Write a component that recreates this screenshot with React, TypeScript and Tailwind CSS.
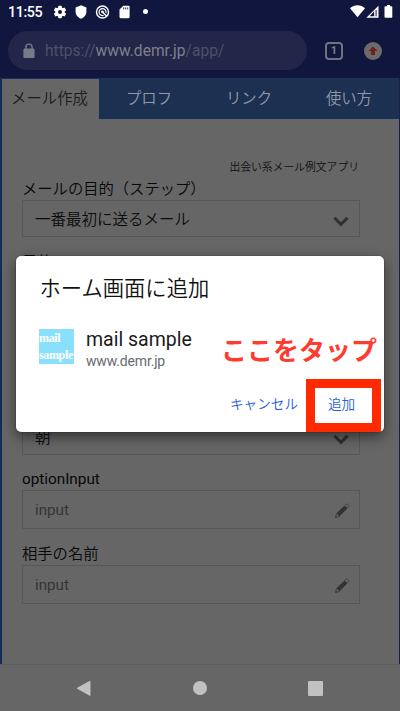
import React from "react";

const tabs = ["プロフ", "リンク", "使い方"];

function StatusBar() {
  return (
    <div className="flex h-6 items-center pl-2 pr-[7px] text-white">
      <span className="w-[35px] whitespace-nowrap text-[14.3px] font-medium leading-6 tracking-[-0.4px]">11:55</span>
      <svg className="ml-[10px] shrink-0" width="14" height="14" viewBox="0 0 14 14">
        <g fill="white">
          <circle cx="7" cy="7" r="4.8" />
          <rect x="5.2" y="0.8" width="3.6" height="12.4" rx="0.7" />
          <rect x="5.2" y="0.8" width="3.6" height="12.4" rx="0.7" transform="rotate(60 7 7)" />
          <rect x="5.2" y="0.8" width="3.6" height="12.4" rx="0.7" transform="rotate(120 7 7)" />
        </g>
        <circle cx="7" cy="7" r="2" fill="#11163f" />
      </svg>
      <svg className="ml-[8px] shrink-0" width="12" height="14" viewBox="0 0 12 14">
        <path d="M6 .3 11.4 2.5V6.5C11.4 9.9 9.2 12.6 6 13.7 2.8 12.6.6 9.9.6 6.5V2.5Z" fill="white" />
      </svg>
      <svg className="ml-[8px] shrink-0" width="15" height="14" viewBox="0 0 15 14" fill="none" stroke="white">
        <circle cx="7.5" cy="7" r="6" strokeWidth="1.4" />
        <path d="M8.6 10.4A3.5 3.5 0 1 1 10.9 8" strokeWidth="1.2" />
        <path d="m7 6.5 4.9 4.9" strokeWidth="1.4" />
        <circle cx="7.4" cy="6.8" r="1.4" fill="white" stroke="none" />
      </svg>
      <svg className="ml-[9px] shrink-0" width="12" height="14" viewBox="0 0 12 14">
        <path d="M4.3.8h5.2a1.1 1.1 0 0 1 1.1 1.1v10.2a1.1 1.1 0 0 1-1.1 1.1H1.6A1.1 1.1 0 0 1 .5 12.1V4.5Z" fill="white" />
        <path d="M4.7 2.4v2M6.7 2.4v2M8.7 2.4v2" stroke="#11163f" strokeWidth=".9" />
      </svg>
      <span className="ml-[12px] size-[5px] -translate-y-px rounded-full bg-white" />
      <svg className="ml-auto shrink-0" width="43" height="16" viewBox="0 0 43 16">
        <path d="M0 4.2C4 .1 11 .1 15 4.2L7.5 13.3Z" fill="white" />
        <path fillRule="evenodd" d="M28.5 1.7v12H16.3ZM24.2 7.3l-4.6 5H24.2Z" fill="white" />
        <path d="M26.1 6v6.3" stroke="#11163f" strokeWidth="1" />
        <path d="M37 1h3v1.3h1.6a.7.7 0 0 1 .7.7v10a.7.7 0 0 1-.7.7h-6.4a.7.7 0 0 1-.7-.7V3a.7.7 0 0 1 .7-.7H37Z" fill="white" />
      </svg>
    </div>
  );
}

function AddressBar() {
  return (
    <div className="mt-[7px] flex h-[39px] items-center pl-2">
      <div className="flex h-[39px] w-[299px] items-center rounded-full bg-[#232649] pl-[15px]">
        <svg width="12" height="16" viewBox="0 0 12 16">
          <rect x=".4" y="5.4" width="11.2" height="9.6" rx="1.3" fill="#777a87" />
          <path d="M2.9 6V4.2a3.1 3.1 0 0 1 6.2 0V6" fill="none" stroke="#777a87" strokeWidth="1.4" />
        </svg>
        <span className="ml-[10px] whitespace-nowrap pt-[3px] text-[15.6px] text-[#4e5167]">
          https://<span className="text-[#7d808c]">www.demr.jp</span>/app/
        </span>
      </div>
      <div className="ml-[18px] flex size-[18px] items-center justify-center rounded-[4px] border-2 border-[#70737f] text-[11px] font-bold leading-none text-[#7d808c]">1</div>
      <div className="ml-[21px] flex size-[18px] items-center justify-center rounded-full bg-[#6b6b6c]">
        <svg width="10" height="10" viewBox="0 0 10 10"><path d="M5 .5 9.6 5H7v4H3V5H.4Z" fill="#702020" /></svg>
      </div>
    </div>
  );
}

function Chevron() {
  return (
    <svg width="16" height="11" viewBox="0 0 16 11" fill="none" stroke="#303030" strokeWidth="3">
      <path d="m1.4 1.8 6.6 6.6 6.6-6.6" />
    </svg>
  );
}

function Pencil() {
  return (
    <svg width="16" height="16" viewBox="0 0 16 16">
      <path d="M2.4 10.2 10.6 2.4 13.5 5.3 5.4 13.4Z" fill="#333" />
      <path d="m2.5 10.4-1 4.1 4.1-1.1M11 2.4l1.5-1.2a.8.8 0 0 1 1.1 0l1.1 1.1a.8.8 0 0 1 0 1.1l-1.2 1.5" fill="none" stroke="#444" />
      <path d="m1.2 14.8.6-2.2 1.6 1.6Z" fill="#383838" />
    </svg>
  );
}

function Label({ children }: { children: React.ReactNode }) {
  return <div className="h-[22px] whitespace-nowrap text-[15.3px] leading-[22px] text-[#080808]">{children}</div>;
}

function SelectBox({ value }: { value: string }) {
  return (
    <div className="flex h-[37px] w-[338px] items-center justify-between border border-[#575757] pl-3 pr-[10px] text-[15.5px] font-[350] text-[#0c0c0c]">
      <span className="pt-[5px]">{value}</span>
      <span className="pt-[5px]"><Chevron /></span>
    </div>
  );
}

function TextBox({ value }: { value: string }) {
  return (
    <div className="flex h-[39px] w-[338px] items-center justify-between border border-[#575757] pl-3 pr-[9px] text-[15.2px] text-[#353535]">
      <span className="pt-px">{value}</span>
      <span className="pt-[3px]"><Pencil /></span>
    </div>
  );
}

function Dialog() {
  return (
    <div className="absolute left-4 top-[256px] flex h-[176px] w-[368px] flex-col rounded-[5px] bg-white shadow-[0_5px_13px_rgba(0,0,0,0.5),0_0_1px_#111]">
      <h1 className="mt-[17px] pl-[23.5px] text-[21.3px] font-[350] leading-8 text-[#111]">ホーム画面に追加</h1>
      <div className="mt-[20px] flex pl-[23px]">
        <div className="mt-[4px] size-[35px] overflow-hidden bg-[#89e0fd] pt-[1px] font-['Liberation_Serif',serif] text-[12px] font-bold leading-[17px] tracking-[-0.35px] text-white">
          <div>mail</div><div>sample</div>
        </div>
        <div className="ml-3">
          <div className="pt-px text-[19.5px] leading-[27px] text-[#1b1b1b]">mail sample</div>
          <div className="text-[14px] leading-[17px] tracking-[-0.16px] text-[#656a70]">www.demr.jp</div>
        </div>
      </div>
      <div className="absolute left-[205px] top-[76px] whitespace-nowrap text-[26px] font-bold leading-[38px] text-[#ff3b30]">ここをタップ</div>
      <div className="mt-auto flex h-[53px] items-center justify-end pr-[3px] text-[13.6px] font-[350] text-[#2761dd]">
        <span className="mr-[8px] pb-0.5">キャンセル</span>
        <button className="h-[53px] w-[75px] border-[9px] border-[#ff2a00] bg-white pb-0.5 pr-1">追加</button>
      </div>
    </div>
  );
}

function SystemNavigation() {
  return (
    <div className="flex h-[47px] items-center justify-between border-t border-[#5c5c5c] bg-[#666] pl-[76px] pr-[77px]">
      <svg width="15" height="17" viewBox="0 0 15 17"><path d="M14 1.2v14.2L1.2 8.3Z" fill="#c1c1c1" stroke="#c1c1c1" strokeLinejoin="round" /></svg>
      <span className="size-[14px] rounded-full bg-[#c1c1c1]" />
      <span className="size-[15px] rounded-[1px] bg-[#c1c1c1]" />
    </div>
  );
}

export default function App() {
  return (
    <div className="relative flex h-[711px] w-[400px] flex-col overflow-hidden bg-[#666] font-[Roboto,'Noto_Sans_CJK_JP',sans-serif]">
      <header className="h-[78px] shrink-0 bg-[#11163f]"><StatusBar /><AddressBar /></header>
      <main className="flex min-h-0 flex-1 flex-col border-l-2 border-r border-l-[#132d58] border-r-[#1b2140]">
        <nav className="flex h-[41px] shrink-0 border-t border-[#1b325b] text-[15.4px] font-[350] text-[#9299a3]">
          <div className="flex w-[97px] items-center justify-center bg-[#666] pr-0.5 pt-0.5 text-[#1a1a1a]">メール作成</div>
          {tabs.map((tab) => <div key={tab} className="flex w-[100px] items-center justify-center border-b border-[#16305f] bg-[#1c3052] pt-[3px]">{tab}</div>)}
        </nav>
        <div className="flex flex-1 flex-col pl-5">
          <div className="mt-[40px] w-[337px] text-right text-[10.8px] font-[350] leading-[18px] text-[#111]">出会い系メール例文アプリ</div>
          <div className="mt-px flex flex-col">
            <Label><span className="font-[350]">メールの目的（ステップ）</span></Label>
            <SelectBox value="一番最初に送るメール" />
            <div className="mt-[14px]"><Label><span className="font-[350]">目的</span></Label></div>
            <div className="mt-[145px]"><SelectBox value="朝" /></div>
            <div className="mt-[13px]"><Label>optionInput</Label></div>
            <TextBox value="input" />
            <div className="mt-[14px]"><Label><span className="font-[350]">相手の名前</span></Label></div>
            <TextBox value="input" />
          </div>
        </div>
      </main>
      <SystemNavigation />
      <Dialog />
    </div>
  );
}
